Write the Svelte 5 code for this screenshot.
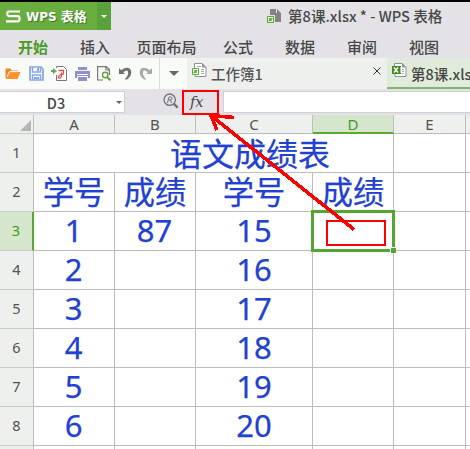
<script>
  const menus = ['开始', '插入', '页面布局', '公式', '数据', '审阅', '视图'];
  const columns = ['A', 'B', 'C', 'D', 'E', ''];
  const rows = [
    ['1', '87', '15', '', '', ''],
    ['2', '', '16', '', '', ''],
    ['3', '', '17', '', '', ''],
    ['4', '', '18', '', '', ''],
    ['5', '', '19', '', '', ''],
    ['6', '', '20', '', '', '']
  ];
</script>

<div class="window">
  <header class="titlebar">
    <div class="brand">
      <svg class="logo" width="15" height="13" viewBox="0 0 15 13"><path d="M14 1.5H3Q1.2 1.5 1.2 3.6T3 6.2H12Q13.5 6.2 13.5 8.7T12 11.4H0" /></svg>
      <b>WPS <span>表格</span></b>
    </div>
    <div class="brand-menu"><i></i></div>
    <div class="doc">
      <svg width="15" height="14" viewBox="0 0 15 14">
        <path d="M3 0h6v4h5v9H8V6H3z" fill="#848484" /><path d="M10 0l4 4h-4z" fill="#848484" />
        <path d="M.5 7.5h6v6h-6z" fill="#edf4e9" stroke="#59aa32" /><path d="M5.5 9.5h-3v1h2v1h-3" fill="none" stroke="#59aa32" />
      </svg>
      <span>第8课.xlsx * - WPS 表格</span>
    </div>
  </header>

  <nav class="menus">
    {#each menus as name, i}
      <span class:active={i === 0} class:wide={i === 2}>{name}</span>
    {/each}
  </nav>

  <div class="toolbar">
    <div class="tools">
      <svg width="16" height="13" viewBox="0 0 16 13"><path d="M.5 11V1.5h5l1 2h6V5H5L2 12z" fill="#ef8526" /><path d="M5 5h10.5l-3 7H1.5z" fill="#ff912c" /><path d="M2 10l2.4-5.4h8" fill="none" stroke="#fff" /></svg>
      <svg width="15" height="15" viewBox="0 0 15 15"><path d="M1 1h11l2 2v11H1z" fill="#fff" stroke="#86a5e8" stroke-width="1.7" /><path d="M3.5 1v5h8V1M3.5 14V9h8v5" fill="none" stroke="#86a5e8" stroke-width="1.5" /><path d="M8 2h2v3H8zM5 11h5v2H5z" fill="#86a5e8" /></svg>
      <svg width="16" height="15" viewBox="0 0 16 15"><path d="M5.5 2V.5h7l3 3v11h-10V9" fill="#fff" stroke="#777" /><path d="M0 4h2V2l4 3.2L2 8V6H0z" fill="#6aaa46" /><path d="M7.5 4.5h5v3q0 1-2 1V6.5M10 8.5q-3 1-2.5 3.5 3 1 3-3.5" fill="none" stroke="#df4d4d" stroke-width="1.3" /></svg>
      <svg width="15" height="14" viewBox="0 0 15 14"><path d="M3 0h9v3H3zM0 4h15v7h-2V9H2v2H0zM3 10h9v4H3z" fill="#9290cc" /><path d="M2 7.5h11" stroke="#fff" /></svg>
      <svg width="14" height="15" viewBox="0 0 14 15"><path d="M6 14H.6V.6h8.8l3 3V9M9 1v3h3" fill="none" stroke="#777" stroke-width="1.2" /><circle cx="8.2" cy="9" r="2.7" fill="none" stroke="#63a23e" stroke-width="1.4" /><path d="M10 11l3.3 3.3" stroke="#63a23e" stroke-width="2" /></svg>
      <svg width="13" height="13" viewBox="0 0 13 13"><path d="M0 1v6h6L4.2 5.2Q8.2 2 9 5T5.8 12.5H8Q12.5 9 12.3 5 11.5.8 8 .8 4.500.8 2.300 3.300z" fill="#707070" /></svg>
      <svg width="13" height="13" viewBox="0 0 13 13"><path d="M13 1v6H7l1.800-1.800Q4.800 2 4 5t3.200 7.500H5Q.5 9 .7 5 1.500.8 5 .8 8.500.8 10.700 3.300z" fill="#a8a8a8" /></svg>
    </div>
    <div class="more"><i></i></div>
    <div class="tab first">
      <svg class="file" width="15" height="15" viewBox="0 0 15 15"><path d="M2.5 5V.5H10l4 4v9H3V11" fill="#fff" stroke="#929292" /><path d="M10 0v4.5h4.5z" fill="#929292" /><path d="M5 3.5h4M9 6.5h3M9 8.5h3M9 10.5h3" stroke="#aaa" /><path d="M.5 5.5h6v6h-6z" fill="#fff" stroke="#59aa32" /><path d="M5.5 7.5h-3v1h2v1h-3" fill="none" stroke="#59aa32" /></svg>
      <span>工作簿1</span>
      <svg class="close" width="8" height="8" viewBox="0 0 8 8"><path d="M.5.5l7 7m0-7l-7 7" stroke="#333" fill="none" /></svg>
    </div>
    <div class="tab current">
      <svg class="file" width="15" height="15" viewBox="0 0 15 15"><path d="M2.5 3V.5H10l4 4v9H3V11" fill="#fff" stroke="#929292" /><path d="M10 0v4.5h4.5z" fill="#929292" /><path d="M10 6.5h2M10 8.500h2M10 10.500h2" stroke="#aaa" /><path d="M0 3h9v8H0z" fill="#3f8b20" /><path d="M2 4.500l4 5m0-5l-4 5" stroke="#fff" stroke-width="1.4" /><path d="M8.500 4v6" stroke="#d9edd0" stroke-width=".7" /></svg>
      <span>第8课.xlsx</span>
    </div>
  </div>

  <div class="formula">
    <div class="name-box"><span>D3</span><i></i></div>
    <svg class="search" width="16" height="16" viewBox="0 0 16 16"><circle cx="6.7" cy="6.7" r="5.7" fill="none" stroke="#737373" stroke-width="1.3" /><path d="M4.5 10L6 4h2.200q2 1 .3 2.700L5.700 7M7.500 7l1 3" fill="none" stroke="#737373" /><path d="M10.700 10.700l4 4" stroke="#737373" stroke-width="2.4" /></svg>
    <div class="fx">fx</div>
    <div class="input"></div>
  </div>

  <main class="sheet">
    <div class="row letters">
      <div class="head corner"><svg width="11" height="11"><path d="M11 0v11H0z" fill="#b5b5b5" /></svg></div>
      {#each columns as c, i}
        <div class="cell c{i}" class:chosen={c === 'D'}>{c}</div>
      {/each}
    </div>
    <div class="row">
      <div class="head">1</div>
      <div class="cell merged">语文成绩表</div><div class="cell c4"></div><div class="cell c5"></div>
    </div>
    <div class="row">
      <div class="head">2</div>
      {#each ['学号', '成绩', '学号', '成绩', '', ''] as t, i}<div class="cell c{i}">{t}</div>{/each}
    </div>
    {#each rows as row, r}
      <div class="row">
        <div class="head" class:chosen={r === 0}>{r + 3}</div>
        {#each row as t, i}
          <div class="cell num c{i}">{t}{#if r === 0 && i === 3}<div class="selection"><b></b></div>{/if}</div>
        {/each}
      </div>
    {/each}
    <div class="row">
      <div class="head"></div>
      {#each columns as _, i}<div class="cell c{i}"></div>{/each}
    </div>
  </main>

  <svg class="notes" width="470" height="449" viewBox="0 0 470 449" fill="none" stroke="#fe0000">
    <path d="M183 91h35v23h-35zM327 221h58v24h-58z" stroke-width="2" />
    <path d="M354 229.500L211 115.500M234 117.500L211 115.500L217 130" stroke-width="3.6" shape-rendering="crispEdges" />
  </svg>
</div>

<style>
  :global(body) { overflow: hidden; }
  .window { position: relative; width: 470px; height: 449px; overflow: hidden; box-sizing: border-box; border-top: 2px solid #000; background: #e4e2e7; color: #464846; font: 15px/20px "Noto Sans", "Noto Sans CJK SC", sans-serif; display: flex; flex-direction: column; }
  .window * { box-sizing: border-box; }
  svg { display: block; flex: none; }
  .titlebar { display: flex; height: 28px; flex: none; white-space: nowrap; }
  .brand { width: 97px; background: #68ad3d; display: flex; align-items: center; padding: 0 0 0 6px; gap: 5px; color: #fff; }
  .brand b { font: 700 12px/20px "DejaVu Sans", sans-serif; text-shadow: 1px 1px 0 #40792b; }
  .brand b span { font: 700 13px/20px "Noto Sans CJK SC", sans-serif; }
  .logo { fill: none; stroke: #fff; stroke-width: 2.2; }
  .brand-menu { width: 14px; background: #59a23a; display: grid; place-items: center; }
  i { width: 0; height: 0; border: 4px solid transparent; border-bottom: 0; border-top-color: #666; }
  .brand-menu i { border-width: 3px 3px 0; border-top-color: #fff; }
  .doc { margin-left: 156px; display: flex; align-items: center; gap: 6px; font-family: "Noto Sans CJK SC", sans-serif; font-weight: 500; font-size: 14.6px; }
  .menus { height: 28px; flex: none; display: flex; padding-left: 2px; font: 500 15px/34px "Noto Sans CJK SC", sans-serif; }
  .menus span { width: 62px; text-align: center; }
  .menus .wide { width: 81px; }
  .menus .active { color: #4a9c26; font-weight: 700; }
  .toolbar { display: flex; height: 31px; flex: none; background: #f9fbf9; }
  .tools { width: 159px; display: flex; align-items: center; justify-content: space-between; padding: 0 7px 0 5px; }
  .more { width: 28px; border-left: 1px solid #d9dbd9; display: grid; place-items: center; }
  .more i { border-width: 5px 5px 0; }
  .tab { height: 31px; display: flex; padding: 5px 0 0 5px; gap: 4px; background: #eef0ee; font: 500 14.5px/22px "Noto Sans CJK SC", sans-serif; white-space: nowrap; flex: none; }
  .first { width: 200px; }
  .first span { color: #555; }
  .close { margin: 4px 6px 0 auto; }
  .current { width: 83px; overflow: hidden; background: #e0ebdb; border-bottom: 2px solid #80b969; }
  .formula { height: 26px; flex: none; display: flex; padding-top: 2px; }
  .name-box { width: 125px; height: 22px; background: #fff; border: 1px solid #d1ced5; border-left: 0; display: flex; align-items: center; }
  .name-box span { width: 116px; padding: 1px 4px 0 0; text-align: center; font: 500 14.5px/20px "Noto Sans CJK SC", sans-serif; }
  .name-box i { border-width: 3px 3px 0; }
  .search { margin: 2px 0 0 38px; }
  .fx { width: 38px; padding-left: 11px; font: italic 17px/23px "DejaVu Serif", "Liberation Serif", serif; font-size: 14.5px; }
  .input { margin-left: 6px; height: 22px; flex: 1; background: #fff; border: 1px solid #d1ced5; border-right: 0; }
  .sheet { background: #fff; }
  .row { display: flex; height: 39px; }
  .head, .cell { flex: none; border-right: 1px solid #bdbdbd; border-bottom: 1px solid #bdbdbd; }
  .head { width: 34px; background: #eef0ee; color: #505350; text-align: center; font-size: 14.5px; line-height: 37px; border-bottom-color: #ccc; }
  .cell { position: relative; width: 81px; color: #2041d3; text-align: center; font: 31.300px/36px "Noto Sans CJK SC", sans-serif; white-space: nowrap; -webkit-text-stroke: .25px currentColor; }
  .c2 { width: 117px; }
  .c4 { width: 72px; }
  .c5 { width: 5px; border-right: 0; }
  .merged { width: 360px; text-align: left; padding-left: 136px; font-size: 32px; }
  .num { font: 31px/36px "Noto Sans", sans-serif; }
  .num.c0, .num.c1 { padding-right: 1px; }
  .letters { height: 19px; }
  .letters .head { padding: 5px 0 0 20px; }
  .letters .cell { background: #eef0ee; color: #505350; font: 15px/18px "Noto Sans", sans-serif; -webkit-text-stroke: 0; }
  .head.chosen { background: #d6e6cd; color: #429c1e; border-right: 2px solid #59aa32; }
  .letters .chosen { background: #d6e6cd; color: #429c1e; border-bottom: 2px solid #59aa32; }
  .selection { position: absolute; left: -2px; top: -2px; width: 84px; height: 42px; border: 3px solid #55a631; z-index: 1; }
  .selection b { position: absolute; right: -4px; bottom: -4px; width: 6px; height: 6px; background: #55a631; border: 1px solid #fff; border-width: 1px 0 0 1px; }
  .notes { position: absolute; left: 0; top: -2px; z-index: 2; }
</style>
